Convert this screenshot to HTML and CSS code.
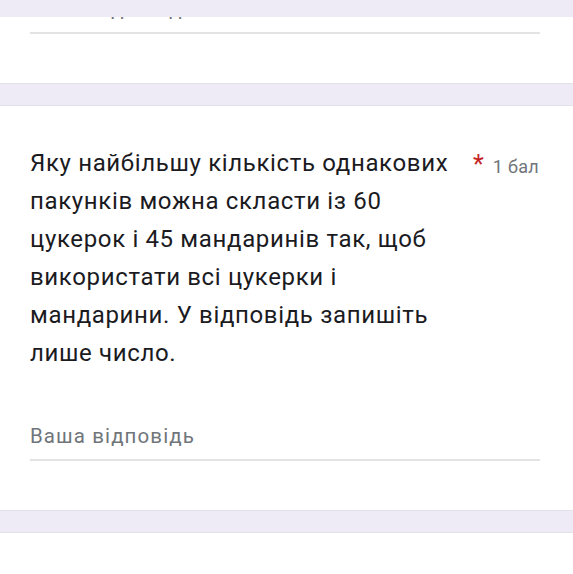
FILE: index.html
```html
<!DOCTYPE html>
<html lang="uk">
<head>
<meta charset="utf-8">
<link rel="stylesheet" href="styles.css">
</head>
<body>
<div class="topbar"></div>
<main class="page">
  <section class="card card-prev">
    <div class="answer">
      <span class="placeholder">Ваша відповідь</span>
    </div>
  </section>
  <section class="card card-question">
    <div class="question">
      <div class="question-text">Яку найбільшу кількість однакових пакунків можна скласти із 60 цукерок і 45 мандаринів так, щоб використати всі цукерки і мандарини. У відповідь запишіть лише число.</div>
      <div class="points"><span class="required">*</span><span class="score">1 бал</span></div>
    </div>
    <div class="answer">
      <span class="placeholder">Ваша відповідь</span>
    </div>
  </section>
  <section class="card card-next"></section>
</main>
</body>
</html>
```
FILE: styles.css
```css
html, body {
  margin: 0;
  padding: 0;
}
body {
  background: #eeebf6;
  font-family: Roboto, "Noto Sans", sans-serif;
  overflow: hidden;
  height: 574px;
}
.topbar {
  position: fixed;
  top: 0;
  left: 0;
  right: 0;
  height: 17px;
  background: #eeebf6;
  z-index: 2;
}
.page {
  display: flex;
  flex-direction: column;
  gap: 21px;
  margin: -27px -8px 0;
}
.card {
  background: #fff;
  border: 1px solid #e2e1e8;
  border-radius: 8px;
  padding: 0 40px 0 37px;
}
.card-prev {
  padding-top: 23px;
  padding-bottom: 49px;
}
.card-question {
  padding-top: 38px;
  padding-bottom: 49px;
}
.card-next {
  height: 60px;
}
.question {
  display: flex;
  align-items: flex-start;
  gap: 14px;
}
.question-text {
  flex: 1;
  font-size: 24px;
  line-height: 38px;
  color: #1b1b1f;
  letter-spacing: 0.65px;
}
.points {
  display: flex;
  align-items: baseline;
  gap: 9px;
  width: 67px;
  white-space: nowrap;
  padding-top: 7px;
}
.required {
  color: #c5221f;
  font-size: 25px;
  line-height: 28px;
}
.score {
  color: #70757a;
  font-size: 18px;
  letter-spacing: 0.3px;
}
.answer {
  margin-top: 52px;
  border-bottom: 2px solid #e3e3e6;
  padding-bottom: 11px;
}
.card-prev .answer {
  margin-top: 0;
}
.placeholder {
  font-size: 20.5px;
  line-height: 24px;
  letter-spacing: 1.1px;
  color: #70757a;
  display: block;
}
```
